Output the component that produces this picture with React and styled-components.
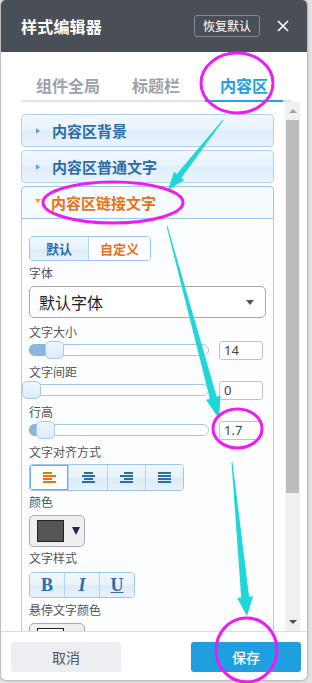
import React from 'react';
import styled, { createGlobalStyle } from 'styled-components';

const FONT = '"Noto Sans CJK SC", "Noto Sans", sans-serif';

const Global = createGlobalStyle`
  html, body { margin: 0; padding: 0; }
  body {
    background: #e2e2e2;
    font-family: ${FONT};
    width: 312px;
    height: 683px;
    overflow: hidden;
  }
  * { box-sizing: border-box; }
`;

const Page = styled.div`
  position: relative;
  width: 312px;
  height: 683px;
`;

const Dialog = styled.div`
  margin-left: 1px;
  width: 306px;
  height: 680px;
  background: #fff;
  border-radius: 5px;
  box-shadow: 0 0 3px rgba(0, 0, 0, 0.45);
  display: flex;
  flex-direction: column;
  overflow: hidden;
`;

const Header = styled.div`
  height: 52px;
  flex: none;
  background: #4a4f57;
  display: flex;
  align-items: center;
  padding: 0 18px 0 20px;
`;

const Title = styled.div`
  color: #fff;
  font-size: 16px;
  font-weight: 700;
  letter-spacing: 0.2px;
`;

const ResetBtn = styled.button`
  margin-left: auto;
  height: 22px;
  width: 66px;
  border: 1px solid #848991;
  border-radius: 3px;
  background: transparent;
  color: #fff;
  font: 12px ${FONT};
  padding: 0;
  line-height: 20px;
`;

const CloseBtn = styled.button`
  margin-left: 17px;
  width: 12px;
  height: 12px;
  border: 0;
  padding: 0;
  background: none;
  display: flex;
`;

const TabBar = styled.div`
  margin: 18px 16px 0 20px;
  height: 32px;
  border-bottom: 2px solid #e3e3e3;
  display: flex;
  align-items: flex-start;
  gap: 10px;
  padding-left: 8px;
  flex: none;
`;

const Tab = styled.div`
  width: 78px;
  height: 32px;
  text-align: center;
  line-height: 30px;
  font-size: 16px;
  font-weight: 700;
  color: ${(p) => (p.$active ? '#1f9fe5' : '#9da2a9')};
  border-bottom: 2px solid ${(p) => (p.$active ? '#22a2e8' : 'transparent')};
`;

const Body = styled.div`
  height: 529px;
  flex: none;
  display: flex;
  padding: 0 7px 0 20px;
  gap: 11px;
`;

const Scroller = styled.div`
  flex: 1;
  overflow: hidden;
  padding-top: 12px;
  display: flex;
  flex-direction: column;
  gap: 3px;
`;

const ScrollTrack = styled.div`
  width: 15px;
  background: #f0f0f0;
  display: flex;
  flex-direction: column;
  align-items: center;
`;

const ScrollArrow = styled.div`
  height: 18px;
  width: 100%;
  flex: none;
  display: flex;
  align-items: center;
  justify-content: center;
`;

const ArrowTri = styled.span`
  width: 0;
  height: 0;
  border-left: 4px solid transparent;
  border-right: 4px solid transparent;
  ${(p) =>
    p.$up
      ? 'border-bottom: 4px solid #a3a3a3;'
      : 'border-top: 4px solid #505050;'}
`;

const Thumb = styled.div`
  width: 13px;
  height: 373px;
  flex: none;
  background: #bcbcbc;
`;

const Spacer = styled.div`
  flex: 1;
`;

const AccHeader = styled.div`
  height: 33px;
  flex: none;
  border: 1px solid ${(p) => (p.$open ? '#9cc6ee' : '#b0d2f1')};
  border-radius: ${(p) => (p.$open ? '4px 4px 0 0' : '4px')};
  background: ${(p) =>
    p.$open
      ? '#f6fbff'
      : 'linear-gradient(#f2f8fe 0%, #e8f3fd 48%, #dfeefb 52%, #e9f3fd 100%)'};
  display: flex;
  align-items: center;
  padding-left: ${(p) => (p.$open ? '13px' : '14px')};
  font-size: 15px;
  font-weight: 700;
  color: ${(p) => (p.$open ? '#e8721a' : '#2d6ca6')};
`;

const Caret = styled.span`
  width: 0;
  height: 0;
  margin-right: ${(p) => (p.$open ? '10px' : '12px')};
  ${(p) =>
    p.$open
      ? `border-left: 3.5px solid transparent; border-right: 3.5px solid transparent; border-top: 4px solid #f2a213; margin-top: -3px;`
      : `border-top: 3.5px solid transparent; border-bottom: 3.5px solid transparent; border-left: 4px solid #6b9fd4;`}
`;

const AccBody = styled.div`
  flex: none;
  border: 1px solid #aacdf0;
  border-top: 0;
  background: #fbfdfe;
  padding: 17px 0 30px 7px;
  display: flex;
  flex-direction: column;
  align-items: flex-start;
`;

const Group = styled.div`
  display: flex;
  height: ${(p) => p.$h}px;
  margin-top: ${(p) => p.$mt || 0}px;
  border: 1px solid #9fc5ec;
  border-radius: 4px;
  overflow: hidden;
`;

const GroupItem = styled.div`
  width: ${(p) => p.$w}px;
  height: 100%;
  display: flex;
  align-items: center;
  justify-content: center;
  border-left: ${(p) => (p.$first ? '0' : '1px solid #b6d4f1')};
  background: ${(p) =>
    p.$active
      ? '#fdfeff'
      : 'linear-gradient(#f1f8fe 0%, #e7f2fc 50%, #dcecfa 52%, #e6f1fc 100%)'};
  box-shadow: ${(p) => (p.$activeBorder ? 'inset 0 0 0 1px #6eaee8' : 'none')};
  font-size: 13px;
  font-weight: 700;
  color: ${(p) => (p.$orange ? '#e8721a' : '#2d6ca6')};
`;

const Label = styled.div`
  font-size: 12px;
  color: #555;
  line-height: 18px;
  margin-top: ${(p) => p.$mt}px;
`;

const Select = styled.div`
  margin-top: 4px;
  width: 237px;
  height: 32px;
  border: 1px solid #a9a9a9;
  border-radius: 5px;
  background: #fff;
  display: flex;
  align-items: center;
  padding: 0 11px 0 9px;
  font-size: 16px;
  color: #222;
`;

const SelectCaret = styled.span`
  margin-left: auto;
  width: 0;
  height: 0;
  border-left: 4px solid transparent;
  border-right: 4px solid transparent;
  border-top: 5px solid #555;
`;

const SliderRow = styled.div`
  display: flex;
  align-items: center;
  height: 18px;
  width: 234px;
`;

const Track = styled.div`
  position: relative;
  width: 180px;
  height: 12px;
  border: 1px solid #a6c9e2;
  border-radius: 6px;
  background: #fff;
`;

const Range = styled.div`
  position: absolute;
  left: -1px;
  top: -1px;
  bottom: -1px;
  background: #8ab6de;
  border-radius: 6px 0 0 6px;
`;

const Handle = styled.div`
  position: absolute;
  top: -4px;
  width: 19px;
  height: 18px;
  border: 1px solid #a9cbe8;
  border-radius: 5px;
  background: linear-gradient(#eef6fe, #dcebfa);
`;

const NumInput = styled.div`
  margin-left: 10px;
  width: 44px;
  height: 19px;
  border: 1px solid #c2c2c2;
  border-radius: 3px;
  background: #fff;
  font: 13px "Noto Sans", sans-serif;
  color: #3b4250;
  line-height: 17px;
  padding-left: 4px;
`;

const ColorPicker = styled.div`
  margin-top: 4px;
  width: 56px;
  height: 32px;
  flex: none;
  border: 1px solid #ababab;
  border-radius: 5px;
  background: #efefef;
  display: flex;
  align-items: center;
  padding-left: 7px;
`;

const Swatch = styled.div`
  width: 27px;
  height: 22px;
  border: 1px solid #222;
  background: ${(p) => p.$color};
`;

const PickerCaret = styled.span`
  margin-left: 8px;
  width: 0;
  height: 0;
  border-left: 4px solid transparent;
  border-right: 4px solid transparent;
  border-top: 8px solid #1d2b45;
`;

const StyleLetter = styled.span`
  font-family: "Liberation Serif", serif;
  font-size: 18px;
  font-weight: 700;
  font-style: ${(p) => (p.$italic ? 'italic' : 'normal')};
  text-decoration: ${(p) => (p.$underline ? 'underline' : 'none')};
  color: #2d6ca6;
`;

const Footer = styled.div`
  flex: 1;
  border-top: 1px solid #dcdcdc;
  display: flex;
  justify-content: space-between;
  padding: 10px 6px 0 10px;
`;

const FootBtn = styled.button`
  width: 110px;
  height: 30px;
  border: 0;
  border-radius: 3px;
  font: ${(p) => (p.$primary ? '500' : '400')} 14px ${FONT};
  background: ${(p) => (p.$primary ? '#1f9ee0' : '#eceef2')};
  color: ${(p) => (p.$primary ? '#fff' : '#555')};
`;

const Overlay = styled.svg`
  position: absolute;
  left: 0;
  top: 0;
  pointer-events: none;
`;

function Slider({ value, min, max }) {
  const ratio = (value - min) / (max - min);
  const left = -8 + ratio * 180;
  return (
    <SliderRow>
      <Track>
        {ratio > 0 && <Range style={{ width: left + 10 }} />}
        <Handle style={{ left }} />
      </Track>
      <NumInput>{value}</NumInput>
    </SliderRow>
  );
}

function AlignIcon({ kind, color }) {
  const widths = kind === 'justify' ? [13, 13, 13, 13] : [9, 13, 9, 13];
  return (
    <svg width="13" height="11" viewBox="0 0 13 11">
      {widths.map((w, i) => {
        let x = 0;
        if (kind === 'center') x = (13 - w) / 2;
        if (kind === 'right') x = 13 - w;
        return <rect key={i} x={x} y={i * 3} width={w} height="2" fill={color} />;
      })}
    </svg>
  );
}

function arrowPoints(sx, sy, tx, ty, w0, w1, L, H) {
  const dx = tx - sx;
  const dy = ty - sy;
  const len = Math.hypot(dx, dy);
  const ux = dx / len;
  const uy = dy / len;
  const nx = -uy;
  const ny = ux;
  const bx = tx - ux * L;
  const by = ty - uy * L;
  const pts = [
    [sx + (nx * w0) / 2, sy + (ny * w0) / 2],
    [bx + (nx * w1) / 2, by + (ny * w1) / 2],
    [bx + (nx * H) / 2, by + (ny * H) / 2],
    [tx, ty],
    [bx - (nx * H) / 2, by - (ny * H) / 2],
    [bx - (nx * w1) / 2, by - (ny * w1) / 2],
    [sx - (nx * w0) / 2, sy - (ny * w0) / 2],
  ];
  return pts.map((p) => p.map((v) => v.toFixed(1)).join(',')).join(' ');
}

const arrows = [
  [223, 120, 168, 190, 1, 6, 18, 13],
  [167, 226, 219, 419, 1, 7, 22, 15],
  [232, 462, 247, 616, 1, 8, 19, 16],
];

const ellipses = [
  [237, 83, 36, 30],
  [113, 202.5, 70, 20.5],
  [237.5, 428.5, 24.5, 19.5],
  [246.5, 650, 30.5, 32],
];

export default function App() {
  return (
    <Page>
      <Global />
      <Dialog>
        <Header>
          <Title>样式编辑器</Title>
          <ResetBtn>恢复默认</ResetBtn>
          <CloseBtn aria-label="close">
            <svg width="12" height="12" viewBox="0 0 12 12">
              <path d="M1 1L11 11M11 1L1 11" stroke="#fff" strokeWidth="1.6" />
            </svg>
          </CloseBtn>
        </Header>
        <TabBar>
          <Tab>组件全局</Tab>
          <Tab>标题栏</Tab>
          <Tab $active>内容区</Tab>
        </TabBar>
        <Body>
          <Scroller>
            <AccHeader>
              <Caret />
              内容区背景
            </AccHeader>
            <AccHeader>
              <Caret />
              内容区普通文字
            </AccHeader>
            <div>
              <AccHeader $open>
                <Caret $open />
                内容区链接文字
              </AccHeader>
              <AccBody>
                <Group $h={25}>
                  <GroupItem $w={58} $first>
                    默认
                  </GroupItem>
                  <GroupItem $w={62} $active $orange>
                    自定义
                  </GroupItem>
                </Group>
                <Label $mt={3}>字体</Label>
                <Select>
                  默认字体
                  <SelectCaret />
                </Select>
                <Label $mt={5}>文字大小</Label>
                <Slider value={14} min={12} max={28} />
                <Label $mt={4}>文字间距</Label>
                <Slider value={0} min={0} max={10} />
                <Label $mt={4}>行高</Label>
                <Slider value={1.7} min={1.5} max={4} />
                <Label $mt={4}>文字对齐方式</Label>
                <Group $h={27} $mt={3}>
                  <GroupItem $w={38} $first $active $activeBorder>
                    <AlignIcon kind="left" color="#e8720e" />
                  </GroupItem>
                  <GroupItem $w={39}>
                    <AlignIcon kind="center" color="#2d6ca6" />
                  </GroupItem>
                  <GroupItem $w={38}>
                    <AlignIcon kind="right" color="#2d6ca6" />
                  </GroupItem>
                  <GroupItem $w={38}>
                    <AlignIcon kind="justify" color="#2d6ca6" />
                  </GroupItem>
                </Group>
                <Label $mt={2}>颜色</Label>
                <ColorPicker>
                  <Swatch $color="#555555" />
                  <PickerCaret />
                </ColorPicker>
                <Label $mt={2}>文字样式</Label>
                <Group $h={26} $mt={5}>
                  <GroupItem $w={34} $first>
                    <StyleLetter>B</StyleLetter>
                  </GroupItem>
                  <GroupItem $w={35}>
                    <StyleLetter $italic>I</StyleLetter>
                  </GroupItem>
                  <GroupItem $w={35}>
                    <StyleLetter $underline>U</StyleLetter>
                  </GroupItem>
                </Group>
                <Label $mt={3}>悬停文字颜色</Label>
                <ColorPicker>
                  <Swatch $color="#ffffff" />
                  <PickerCaret />
                </ColorPicker>
              </AccBody>
            </div>
          </Scroller>
          <ScrollTrack>
            <ScrollArrow>
              <ArrowTri $up />
            </ScrollArrow>
            <Thumb />
            <Spacer />
            <ScrollArrow>
              <ArrowTri />
            </ScrollArrow>
          </ScrollTrack>
        </Body>
        <Footer>
          <FootBtn>取消</FootBtn>
          <FootBtn $primary>保存</FootBtn>
        </Footer>
      </Dialog>
      <Overlay width="312" height="683" viewBox="0 0 312 683">
        {arrows.map((a, i) => (
          <polygon key={i} points={arrowPoints(...a)} fill="#1fd6d8" />
        ))}
        {ellipses.map(([cx, cy, rx, ry], i) => (
          <ellipse key={i} cx={cx} cy={cy} rx={rx} ry={ry} fill="none" stroke="#ee1cee" strokeWidth="3" />
        ))}
      </Overlay>
    </Page>
  );
}
